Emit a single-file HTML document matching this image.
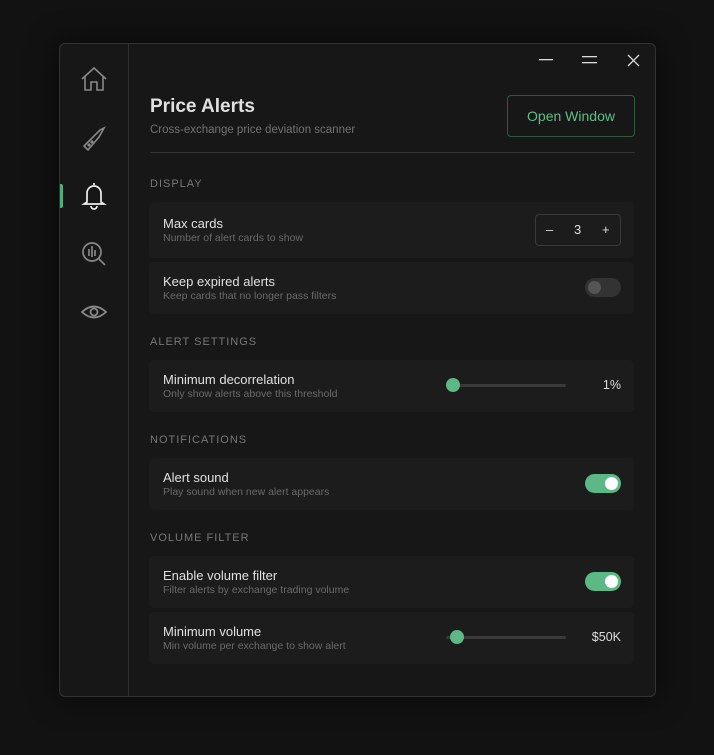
<!DOCTYPE html><html><head><style>
body{margin:0;width:714px;height:755px;background:#121212;font-family:"Liberation Sans",sans-serif;position:relative;overflow:hidden}
.win{position:absolute;left:59px;top:43px;width:595px;height:652px;background:#171717;border:1px solid #333;border-radius:6px;box-shadow:0 0 30px rgba(0,0,0,.6)}
.side{position:absolute;left:0;top:0;width:68px;height:100%;border-right:1px solid #2e2e2e}
.ic{position:absolute;left:20px}
.a{position:absolute}
.t{color:#e0e0e0;font-size:13px}
.s{color:#6a6a6a;font-size:10.5px}
.lab{position:absolute;left:89px;color:#777;font-size:11px;letter-spacing:1px}
.card{position:absolute;left:89px;width:485px;background:#1c1c1c;border-radius:5px}
.tg{position:absolute;right:13px;width:36px;height:19px;border-radius:10px}
.tg i{position:absolute;top:3px;width:13px;height:13px;border-radius:50%}
</style></head><body><div class="win">
<div class="side">
<div style="position:absolute;left:0;top:140px;width:3px;height:24px;background:#4caf7a;border-radius:0 2px 2px 0"></div>
<svg class="ic" style="top:21px" width="28" height="28" viewBox="0 0 28 28" fill="none" stroke="#888" stroke-width="1.6"><path d="M2 14L14 3L26 14M5 11V25H11V17H17V25H23V11"/></svg>
<svg class="ic" style="top:80px" width="28" height="28" viewBox="0 0 28 28" fill="none" stroke="#888" stroke-width="1.6"><path d="M4 22L8 26L19 13L24 4L20 6L4 22Z"/><circle cx="9" cy="21" r=".8"/><circle cx="12" cy="18" r=".8"/></svg>
<svg class="ic" style="top:136px" width="28" height="30" viewBox="0 0 28 30" fill="none" stroke="#eee" stroke-width="1.7"><path d="M14 3V5M7 22V13A7 7 0 0121 13V22L24 24H4Z"/><path d="M11 26A3 3 0 0017 26"/></svg>
<svg class="ic" style="top:196px" width="28" height="28" viewBox="0 0 28 28" fill="none" stroke="#888" stroke-width="1.7"><circle cx="12" cy="12" r="9"/><path d="M18.5 18.5L25 25M9 9V16M12 6V17M15 10V16"/></svg>
<svg class="ic" style="top:257px" width="28" height="22" viewBox="0 0 28 22" fill="none" stroke="#888" stroke-width="1.8"><path d="M2 11Q14 0 26 11Q14 22 2 11Z"/><circle cx="14" cy="11" r="3.5"/></svg>
</div>
<svg class="a" style="left:479px;top:15px" width="16" height="2"><rect width="14" height="1.3" fill="#ddd"/></svg>
<svg class="a" style="left:522px;top:11px" width="16" height="10"><rect y="1" width="15" height="1.3" fill="#ddd"/><rect y="7" width="15" height="1.3" fill="#ddd"/></svg>
<svg class="a" style="left:567px;top:10px" width="13" height="13" stroke="#ddd" stroke-width="1.3"><path d="M1 1L12 12M12 1L1 12"/></svg>
<div class="a" style="left:90px;top:52px;color:#e0e0e0;font-size:19px;font-weight:bold">Price Alerts</div>
<div class="a" style="left:90px;top:80px;color:#727272;font-size:11.5px">Cross-exchange price deviation scanner</div>
<div class="a" style="left:447px;top:51px;width:126px;height:40px;border:1px solid #2f5a41;border-radius:4px;color:#5cc088;font-size:14px;text-align:center;line-height:40px">Open Window</div>
<div class="a" style="left:90px;top:108px;width:485px;height:1px;background:#333"></div>
<div class="lab" style="top:134px;left:90px">DISPLAY</div>
<div class="card" style="top:158px;height:56px"><div class="a t" style="left:14px;top:14px">Max cards</div><div class="a s" style="left:14px;top:30px">Number of alert cards to show</div>
<div class="a" style="left:386px;top:12px;width:84px;height:30px;border:1px solid #3a3a3a;border-radius:4px;color:#ddd;font-size:13px;line-height:30px"><span class="a" style="left:10px">–</span><span class="a" style="left:38px">3</span><span class="a" style="left:66px">+</span></div></div>
<div class="card" style="top:218px;height:52px"><div class="a t" style="left:14px;top:12px">Keep expired alerts</div><div class="a s" style="left:14px;top:28px">Keep cards that no longer pass filters</div>
<div class="tg" style="top:16px;background:#333"><i style="left:3px;background:#555"></i></div></div>
<div class="lab" style="top:292px;left:90px">ALERT SETTINGS</div>
<div class="card" style="top:316px;height:52px"><div class="a t" style="left:14px;top:12px">Minimum decorrelation</div><div class="a s" style="left:14px;top:28px">Only show alerts above this threshold</div>
<div class="a" style="left:304px;top:24px;width:113px;height:3px;background:#3a3a3a;border-radius:2px"></div><div class="a" style="left:297px;top:18px;width:14px;height:14px;border-radius:50%;background:#5cb884"></div>
<div class="a" style="right:13px;top:18px;color:#ddd;font-size:12.5px">1%</div></div>
<div class="lab" style="top:390px;left:90px">NOTIFICATIONS</div>
<div class="card" style="top:414px;height:52px"><div class="a t" style="left:14px;top:12px">Alert sound</div><div class="a s" style="left:14px;top:28px">Play sound when new alert appears</div>
<div class="tg" style="top:16px;background:#5cb884"><i style="right:3px;background:#fff"></i></div></div>
<div class="lab" style="top:488px;left:90px">VOLUME FILTER</div>
<div class="card" style="top:512px;height:52px"><div class="a t" style="left:14px;top:12px">Enable volume filter</div><div class="a s" style="left:14px;top:28px">Filter alerts by exchange trading volume</div>
<div class="tg" style="top:16px;background:#5cb884"><i style="right:3px;background:#fff"></i></div></div>
<div class="card" style="top:568px;height:52px"><div class="a t" style="left:14px;top:12px">Minimum volume</div><div class="a s" style="left:14px;top:28px">Min volume per exchange to show alert</div>
<div class="a" style="left:297px;top:24px;width:120px;height:3px;background:#3a3a3a;border-radius:2px"></div><div class="a" style="left:301px;top:18px;width:14px;height:14px;border-radius:50%;background:#5cb884"></div>
<div class="a" style="right:13px;top:18px;color:#ddd;font-size:12.5px">$50K</div></div>
</div></body></html>
